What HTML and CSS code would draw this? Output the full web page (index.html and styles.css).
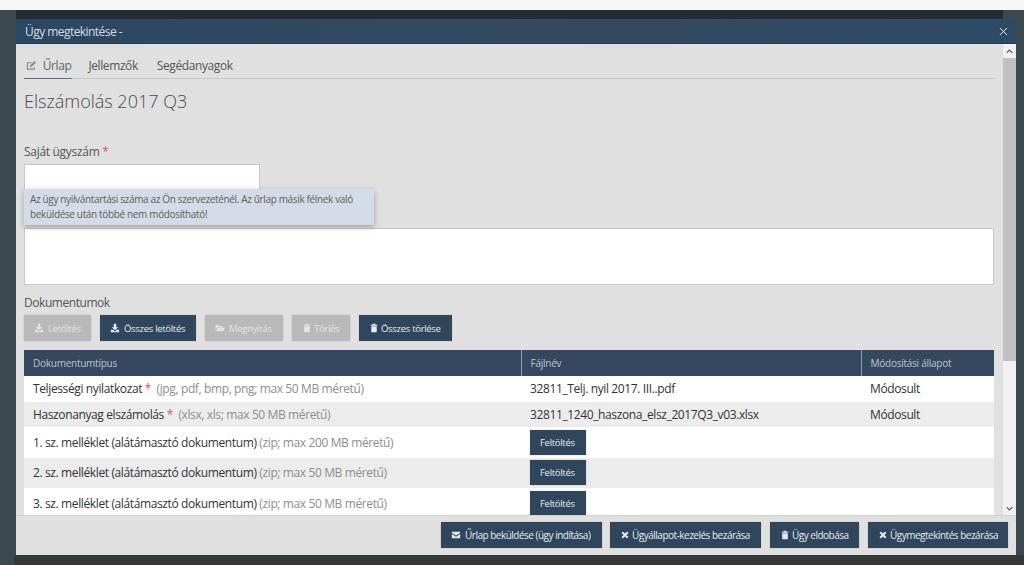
FILE: index.html
```html
<!DOCTYPE html>
<html lang="hu">
<head>
<meta charset="utf-8">
<title>Ügy megtekintése</title>
<link rel="stylesheet" href="styles.css">
</head>
<body>
<svg class="defs" width="0" height="0" aria-hidden="true">
  <symbol id="i-down" viewBox="0 0 12 12"><path fill="currentColor" d="M4.500 1h3v4h2.500L6 8.600 2 5h2.500zM1 8h2.600L6 10.100 8.400 8H11v3H1z"/></symbol>
  <symbol id="i-folder" viewBox="0 0 12 12"><path fill="currentColor" d="M0.500 2.500h3.500l1 1h4v1.300H3L0.500 8.500zM3.500 5.500H12L9.800 9.800H1.200z"/></symbol>
  <symbol id="i-trash" viewBox="0 0 12 12"><path fill="currentColor" d="M4.500 1h3l.5 1h2v1.200H2V2h2zM2.700 3.800h6.600V11H2.700z"/></symbol>
  <symbol id="i-mail" viewBox="0 0 12 12"><path fill="currentColor" d="M1 2.200h10v1.300L6 6.600 1 3.500zM1 4.800 6 8l5-3.200v5H1z"/></symbol>
  <symbol id="i-x" viewBox="0 0 12 12"><path fill="none" stroke="currentColor" stroke-width="2.400" d="M2.700 2.700l6.600 6.600M9.300 2.700l-6.600 6.600"/></symbol>
</svg>
<div class="topbar"></div>
<div class="stage">
  <div class="backstrip"></div>
  <section class="modal">
    <header class="modal-head">
      <span>Ügy megtekintése -</span>
      <svg class="close" viewBox="0 0 10 10"><path d="M1 1l8 8M9 1l-8 8" fill="none" stroke="currentColor" stroke-width="1"/></svg>
    </header>
    <div class="modal-scroll">
      <div class="modal-body">
        <nav class="tabs">
          <a class="tab active">
            <svg class="tab-icon" viewBox="0 0 12 12"><path fill="none" stroke="currentColor" stroke-width="1.200" d="M9 7.500V10H1.500V3H6"/><path fill="currentColor" d="M4.500 6l4.800-4.800 1.500 1.500L6 7.500H4.500z"/></svg>
            Űrlap
          </a>
          <a class="tab">Jellemzők</a>
          <a class="tab">Segédanyagok</a>
        </nav>
        <h1 class="title">Elszámolás 2017 Q3</h1>
        <label class="field-label">Saját ügyszám<span class="req"> *</span></label>
        <div class="field-wrap">
          <div class="input"></div>
          <div class="tooltip">Az ügy nyilvántartási száma az Ön szervezeténél. Az űrlap másik félnek való beküldése után többé nem módosítható!</div>
        </div>
        <div class="textarea"></div>
        <div class="doc-label">Dokumentumok</div>
        <div class="toolbar">
          <button class="btn off"><svg class="ic"><use href="#i-down"/></svg>Letöltés</button>
          <button class="btn"><svg class="ic"><use href="#i-down"/></svg>Összes letöltés</button>
          <button class="btn off"><svg class="ic"><use href="#i-folder"/></svg>Megnyitás</button>
          <button class="btn off"><svg class="ic tight"><use href="#i-trash"/></svg>Törlés</button>
          <button class="btn"><svg class="ic tight"><use href="#i-trash"/></svg>Összes törlése</button>
        </div>
        <table class="docs">
          <colgroup><col class="c1"><col class="c2"><col class="c3"></colgroup>
          <thead>
            <tr><th>Dokumentumtípus</th><th>Fájlnév</th><th>Módosítási állapot</th></tr>
          </thead>
          <tbody>
            <tr class="r-text"><td>Teljességi nyilatkozat <span class="req">*</span> <span class="hint">&nbsp;(jpg, pdf, bmp, png; max 50 MB méretű)</span></td><td>32811_Telj. nyil 2017. III..pdf</td><td>Módosult</td></tr>
            <tr class="r-text"><td>Haszonanyag elszámolás <span class="req">*</span> <span class="hint">&nbsp;(xlsx, xls; max 50 MB méretű)</span></td><td>32811_1240_haszona_elsz_2017Q3_v03.xlsx</td><td>Módosult</td></tr>
            <tr class="r-btn"><td>1. sz. melléklet (alátámasztó dokumentum) <span class="hint">(zip; max 200 MB méretű)</span></td><td><button class="btn up">Feltöltés</button></td><td></td></tr>
            <tr class="r-btn"><td>2. sz. melléklet (alátámasztó dokumentum) <span class="hint">(zip; max 50 MB méretű)</span></td><td><button class="btn up">Feltöltés</button></td><td></td></tr>
            <tr class="r-btn"><td>3. sz. melléklet (alátámasztó dokumentum) <span class="hint">(zip; max 50 MB méretű)</span></td><td><button class="btn up">Feltöltés</button></td><td></td></tr>
          </tbody>
        </table>
      </div>
      <div class="scrollbar">
        <div class="sb-arrow"><svg viewBox="0 0 10 6"><path d="M1 5l4-4 4 4" fill="none" stroke="currentColor" stroke-width="1.500"/></svg></div>
        <div class="sb-track"><div class="sb-thumb"></div></div>
        <div class="sb-arrow"><svg viewBox="0 0 10 6"><path d="M1 1l4 4 4-4" fill="none" stroke="currentColor" stroke-width="1.500"/></svg></div>
      </div>
    </div>
    <footer class="modal-foot">
      <button class="btn big"><svg class="ic"><use href="#i-mail"/></svg>Űrlap beküldése (ügy indítása)</button>
      <button class="btn big"><svg class="ic tight"><use href="#i-x"/></svg>Ügyállapot-kezelés bezárása</button>
      <button class="btn big"><svg class="ic tight"><use href="#i-trash"/></svg>Ügy eldobása</button>
      <button class="btn big"><svg class="ic tight"><use href="#i-x"/></svg>Ügymegtekintés bezárása</button>
    </footer>
  </section>
  <div class="bottomstrip"></div>
</div>
</body>
</html>
```
FILE: styles.css
```css
* { box-sizing: border-box; }
html, body { margin: 0; height: 100%; overflow: hidden; }
body {
  font-family: "Open Sans", "Noto Sans", sans-serif;
  font-size: 13px;
  color: #3c3c3c;
  background: #f5f5f5;
  display: flex;
  flex-direction: column;
}
.defs { position: absolute; }
.topbar { height: 10px; background: #f5f6f6; flex: none; }
.stage {
  flex: 1;
  min-height: 0;
  background: #3a4a50;
  padding: 0 8px 0 16px;
  display: flex;
  flex-direction: column;
}
.backstrip { height: 9px; margin-right: 13px; background: #242d34; flex: none; }
.bottomstrip { height: 10px; flex: none; margin: 0 -8px 0 -2px; background: #353839; }
.modal {
  flex: 1;
  min-height: 0;
  display: flex;
  flex-direction: column;
  background: #e0e0e0;
}
.modal-head {
  height: 25px;
  flex: none;
  background: linear-gradient(90deg, #2b4862, #33495f 60%, #2c4a66);
  color: #d5dce3;
  font-size: 12px;
  letter-spacing: -.55px;
  display: flex;
  align-items: center;
  justify-content: space-between;
  padding: 0 8px 0 9px;
  border-bottom: 1px solid #21384d;
}
.close { width: 9px; height: 9px; color: #fff; }
.modal-scroll { flex: 1; min-height: 0; display: flex; overflow: hidden; }
.modal-body { flex: 1; min-width: 0; padding: 10px 9px 0 8px; overflow: hidden; }
.tabs { display: flex; gap: 17px; height: 25px; border-bottom: 1px solid #c9c9c9; font-size: 12px; letter-spacing: -.4px; color: #555; }
.tab { padding: 0 1px; height: 25px; line-height: 23px; display: block; }
.tab.active { border-bottom: 1px solid #5b7286; color: #666; margin-right: -2px; }
.tab-icon { width: 11px; height: 11px; color: #888; vertical-align: -1px; margin-right: 3px; margin-left: 1px; }
.title { font-size: 18px; font-weight: 300; color: #4a4a4a; margin: 10px 0 0; line-height: 25px; height: 25px; }
.field-label { display: block; margin-top: 29px; font-size: 12px; letter-spacing: -.3px; line-height: 17px; color: #555; }
.req { color: #d9534f; }
.field-wrap { position: relative; margin-top: 4px; height: 64px; }
.input { width: 236px; height: 30px; background: #fff; border: 1px solid #c8c8c8; }
.tooltip {
  position: absolute;
  left: 0;
  top: 25px;
  width: 350px;
  height: 36px;
  padding: 3px 6px;
  font-size: 10px;
  letter-spacing: -.35px;
  line-height: 15px;
  background: #d2dbe6;
  color: #606060;
  box-shadow: 0 2px 6px rgba(0,0,0,.3);
}
.textarea { height: 57px; background: #fff; border: 1px solid #c8c8c8; }
.doc-label { margin-top: 9px; font-size: 12px; letter-spacing: -.45px; line-height: 17px; color: #555; }
.toolbar { display: flex; gap: 9px; margin-top: 4px; }
.btn {
  height: 26px;
  border: 0;
  padding: 0 10px;
  background: #2f465d;
  color: #e6ebef;
  font-family: inherit;
  font-size: 9.500px;
  letter-spacing: -.3px;
  display: inline-flex;
  align-items: center;
  white-space: nowrap;
  box-shadow: 0 0 1px rgba(0,0,0,.3);
}
.btn.off { background: #b9b9b9; color: #e4e4e4; }
.ic { width: 10px; height: 10px; margin-right: 4px; flex: none; }
.ic.tight { margin-right: 2px; }
.toolbar .btn:nth-child(1) { width: 67px; }
.toolbar .btn:nth-child(2) { width: 96px; }
.toolbar .btn:nth-child(3) { width: 78px; }
.toolbar .btn:nth-child(4) { width: 58px; }
.toolbar .btn:nth-child(5) { width: 93px; }
.docs { width: 970px; margin-top: 9px; border-collapse: collapse; table-layout: fixed; font-size: 12px; letter-spacing: -.38px; }
.c1 { width: 497px; }
.c2 { width: 340px; }
.docs th {
  height: 26px;
  background: #34495f;
  color: #b9c6d2;
  font-size: 10px;
  letter-spacing: -.25px;
  font-weight: 400;
  text-align: left;
  padding: 0 9px;
  border-right: 1px solid #8ba0b3;
}
.docs th:last-child { border-right: 0; }
.docs td { padding: 0 9px; background: #fff; color: #333; white-space: nowrap; }
.docs tr:nth-child(even) td { background: #ececec; }
.r-text td { height: 25.500px; }
.r-btn td { height: 30.500px; }
.hint { color: #8e8e8e; }
.btn.up { height: 25px; padding: 0 10px; width: 56px; vertical-align: middle; }
.scrollbar { width: 13px; flex: none; background: #f1f1f1; display: flex; flex-direction: column; }
.sb-arrow { height: 14px; flex: none; background: #f1f1f1; color: #505050; display: flex; align-items: center; justify-content: center; }
.sb-arrow svg { width: 7px; height: 5px; }
.sb-track { flex: 1; min-height: 0; }
.sb-thumb { height: 303px; background: #c1c1c1; }
.modal-foot {
  height: 40px;
  flex: none;
  display: flex;
  justify-content: flex-end;
  align-items: center;
  gap: 9px;
  padding: 0 8px 2px 0;
  border-top: 1px solid #cfcfcf;
}
.btn.big { height: 26px; font-size: 10px; letter-spacing: -.5px; padding: 0 10px; }
.modal-foot .btn:nth-child(1) { width: 161px; margin-right: -1px; }
.modal-foot .btn:nth-child(2) { width: 151px; }
.modal-foot .btn:nth-child(3) { width: 89px; }
.modal-foot .btn:nth-child(4) { width: 140px; }
```
